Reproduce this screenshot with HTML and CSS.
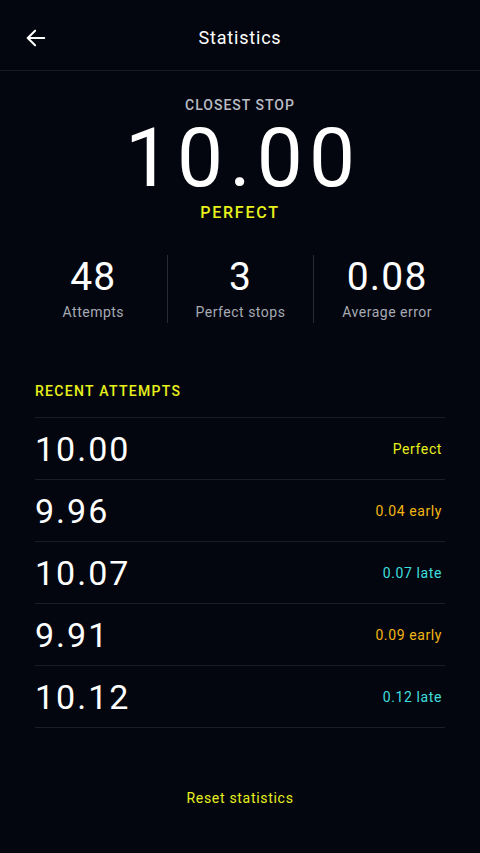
FILE: index.html
```html
<!DOCTYPE html>
<html lang="en">
<head>
    <meta charset="UTF-8">
    <meta name="viewport" content="width=device-width, initial-scale=1.0">
    <title>Statistics</title>
    <link rel="stylesheet" href="styles.css">
</head>
<body>

<div class="screen">
    <!-- Header -->
    <div class="top-bar">
        <div class="back-button">
            <svg width="22" height="22" viewBox="0 0 24 24" fill="none" stroke="#fff" stroke-width="2.2" stroke-linecap="round" stroke-linejoin="round">
                <path d="M21 12H3"/>
                <path d="M11 4l-8 8 8 8"/>
            </svg>
        </div>
        <div class="top-title">Statistics</div>
    </div>

    <!-- Best result -->
    <div class="best">
        <div class="best-label">CLOSEST STOP</div>
        <div class="best-value">10.00</div>
        <div class="best-grade">PERFECT</div>
    </div>

    <!-- Summary -->
    <div class="summary">
        <div class="summary-item">
            <div class="summary-value">48</div>
            <div class="summary-label">Attempts</div>
        </div>
        <div class="summary-item">
            <div class="summary-value">3</div>
            <div class="summary-label">Perfect stops</div>
        </div>
        <div class="summary-item">
            <div class="summary-value">0.08</div>
            <div class="summary-label">Average error</div>
        </div>
    </div>

    <!-- Recent attempts -->
    <div class="recent">
        <div class="section-title">RECENT ATTEMPTS</div>
        <div class="attempt">
            <span class="attempt-time">10.00</span>
            <span class="attempt-note perfect">Perfect</span>
        </div>
        <div class="attempt">
            <span class="attempt-time">9.96</span>
            <span class="attempt-note early">0.04 early</span>
        </div>
        <div class="attempt">
            <span class="attempt-time">10.07</span>
            <span class="attempt-note late">0.07 late</span>
        </div>
        <div class="attempt">
            <span class="attempt-time">9.91</span>
            <span class="attempt-note early">0.09 early</span>
        </div>
        <div class="attempt">
            <span class="attempt-time">10.12</span>
            <span class="attempt-note late">0.12 late</span>
        </div>
    </div>

    <div class="reset">Reset statistics</div>
</div>

</body>
</html>
```

FILE: styles.css
```css
/* Page */
body {
    margin: 0;
    background-color: #04060f;
    color: #fff;
    font-family: Roboto, "Liberation Sans", sans-serif;
}

.screen {
    min-height: 853px;
    display: flex;
    flex-direction: column;
}

/* Header */
.top-bar {
    height: 70px;
    display: flex;
    align-items: center;
    justify-content: center;
    position: relative;
    border-bottom: 1px solid #151a26;
}

.back-button {
    position: absolute;
    left: 25px;
    top: 27px;
    width: 22px;
    height: 22px;
}

.top-title {
    font-size: 18px;
    letter-spacing: 0.8px;
    margin-top: 5px;
}

/* Best result */
.best {
    display: flex;
    flex-direction: column;
    align-items: center;
    padding-top: 26px;
}

.best-label {
    font-size: 14px;
    line-height: 17px;
    color: #b9bcc4;
    letter-spacing: 1px;
    font-weight: 500;
}

.best-value {
    font-size: 82px;
    line-height: 72px;
    margin-top: 8px;
    letter-spacing: 6px;
    margin-right: -6px;
}

.best-grade {
    font-size: 16px;
    line-height: 19px;
    margin-top: 9px;
    font-weight: 500;
    color: #e8f01c;
    letter-spacing: 1.8px;
}

/* Summary */
.summary {
    display: grid;
    grid-template-columns: 1fr 1fr 1fr;
    margin: 33px 20px 0;
}

.summary-item {
    display: flex;
    flex-direction: column;
    align-items: center;
    padding-top: 2px;
    border-left: 1px solid #262b36;
    height: 68px;
    box-sizing: border-box;
}

.summary-item:first-child {
    border-left: none;
}

.summary-value {
    font-size: 39px;
    line-height: 40px;
    letter-spacing: 1.2px;
}

.summary-label {
    font-size: 14px;
    line-height: 16px;
    color: #a6aab3;
    margin-top: 7px;
    letter-spacing: 0.5px;
}

/* Recent attempts */
.recent {
    margin: 60px 35px 0;
}

.section-title {
    font-size: 14px;
    font-weight: 500;
    color: #e8f01c;
    letter-spacing: 1.3px;
    padding-bottom: 18px;
    border-bottom: 1px solid #181d29;
}

.attempt {
    height: 61px;
    display: flex;
    align-items: center;
    justify-content: space-between;
    border-bottom: 1px solid #181d29;
}

.attempt-time {
    font-size: 34px;
    letter-spacing: 2px;
}

.attempt-note {
    font-size: 14px;
    letter-spacing: 0.6px;
    margin-right: 3px;
}

.perfect {
    color: #e8f01c;
}

.early {
    color: #f2b613;
}

.late {
    color: #3fdede;
}

/* Footer link */
.reset {
    margin-top: 62px;
    text-align: center;
    font-size: 14px;
    color: #e8f01c;
    letter-spacing: 0.7px;
}
```
